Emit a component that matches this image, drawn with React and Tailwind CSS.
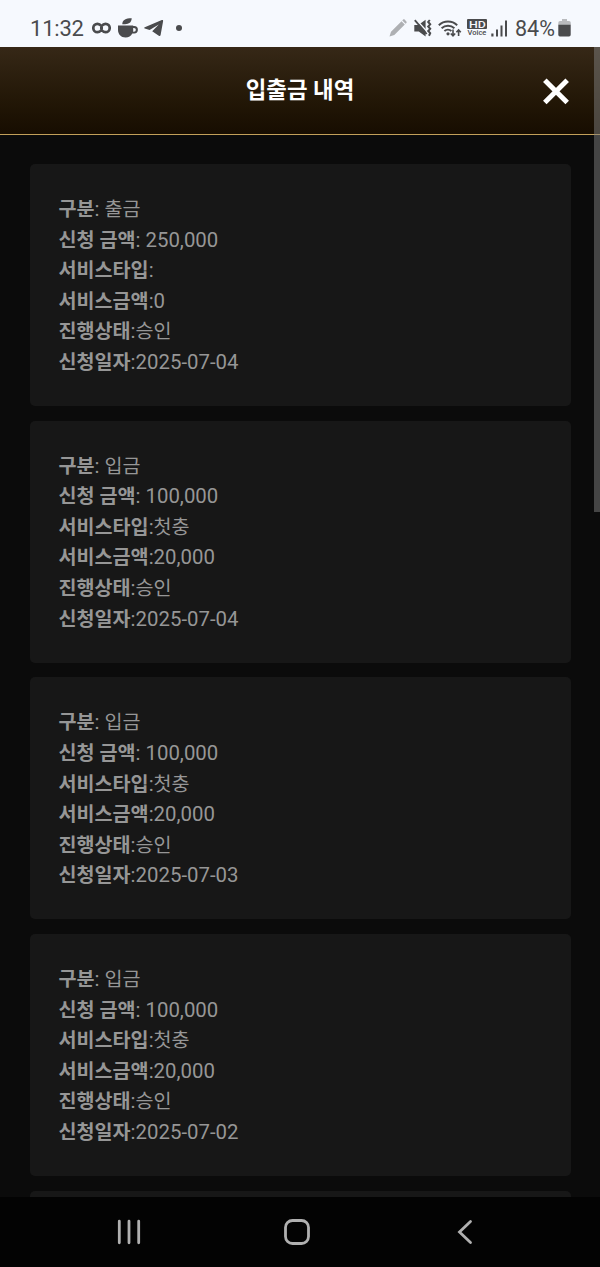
import React from "react";

const records = [
  { id: 1, type: "출금", amount: "250,000", service: "", serviceAmount: "0", status: "승인", date: "2025-07-04" },
  { id: 2, type: "입금", amount: "100,000", service: "첫충", serviceAmount: "20,000", status: "승인", date: "2025-07-04" },
  { id: 3, type: "입금", amount: "100,000", service: "첫충", serviceAmount: "20,000", status: "승인", date: "2025-07-03" },
  { id: 4, type: "입금", amount: "100,000", service: "첫충", serviceAmount: "20,000", status: "승인", date: "2025-07-02" },
];

function StatusBar() {
  return (
    <div className="h-[47px] shrink-0 bg-[#f6f9fe] flex items-center pt-[9px] pl-[30px] pr-[29px] text-[#4a4b4d] text-[22px] leading-none">
      <span className="w-[62px] pt-px tracking-[-0.200px]">11:32</span>

      {/* Notification icons */}
      <svg width="19" height="14" viewBox="0 0 19 14" fill="none" stroke="currentColor" strokeWidth="2.700">
        <path d="M9.500 9C8.400 10.300 7 11.200 5.500 11.200a4.200 4.200 0 0 1 0-8.400C7 2.800 8.400 3.700 9.500 5c1.100-1.300 2.500-2.200 4-2.200a4.200 4.200 0 0 1 0 8.400C12 11.200 10.600 10.300 9.500 9Z" />
        <path d="M8 7h3" strokeWidth="3" />
      </svg>
      <svg className="ml-[7px]" width="20" height="20" viewBox="0 0 20 20" fill="currentColor">
        <path d="M4.300 6.200C4.300 2 7.500.3 13.700.3 13.500 4.300 11 6.200 7 6.200Z" />
        <path
          fillRule="evenodd"
          d="M0 7.500h15.200v.6h1a3.700 3.700 0 0 1 0 7.400h-1.900C12.900 18.200 10.700 19.500 7.600 19.500 3 19.500 0 16 0 12Zm15.200 2.400v3.900h.7a1.950 1.950 0 0 0 0-3.900Z"
        />
      </svg>
      <svg className="ml-[6px]" width="20" height="18" viewBox="0 0 20 18" fill="currentColor">
        <path d="M.8 8.200 17.800 1.100c.9-.4 1.500.1 1.300 1.200l-2.500 13.700c-.2 1.100-.9 1.300-1.800.8L8.200 12.200l6.600-6.800L5.600 11 .8 9.500c-.8-.3-.8-1 0-1.300Z" />
      </svg>
      <span className="ml-[12px] w-1.5 h-1.5 rounded-full bg-[#4a4b4d]" />

      {/* System icons */}
      <div className="ml-auto flex items-center">
        <svg width="18" height="18" viewBox="0 0 18 18" fill="#aeb0b3">
          <path d="M.5 17.500 2 12.700 12.500 2.200l3.300 3.300L5.300 16ZM13.300 1.400l.8-.8c.5-.5 1-.4 1.500 0l1.800 1.800c.4.500.4 1 0 1.500l-.8.8Z" />
        </svg>
        <svg className="ml-[7px]" width="18" height="18" viewBox="0 0 18 18" fill="none" stroke="currentColor">
          <path d="M.3 6h4L11.600.8v16.700L4.800 12.500H.3Z" fill="currentColor" stroke="none" />
          <path d="M1.800.3 13.300 12.800" stroke="#f6f9fe" strokeWidth="1.500" />
          <path d="M.8 1.200 12.700 15" strokeWidth="1.800" />
          <path d="M15.800 1l-1.600 2 2 2.300-2 2.200 2 2.300-2 2.200 2 2.200-1.200 2.500" strokeWidth="2" />
        </svg>
        <svg className="ml-[6px]" width="24" height="18" viewBox="0 0 24 18" fill="none" stroke="currentColor" strokeWidth="1.900">
          <path d="M.8 6.200a13.300 13.300 0 0 1 18.400 0M3.600 9.300a9.200 9.200 0 0 1 12.800 0M6.400 12a5.200 5.200 0 0 1 7 0" />
          <circle cx="10" cy="14.800" r="1.600" fill="currentColor" stroke="none" />
          <path d="M15 10.500v6M12.800 14.500l2.200 2.300 2.200-2.300M20.600 17V11M18.400 13.300l2.200-2.300 2.200 2.300" strokeWidth="1.600" />
        </svg>
        <div className="ml-[5px] w-5 flex flex-col items-center">
          <span className="w-5 h-[10px] rounded-[1px] bg-[#4a4b4d] text-[#f6f9fe] text-[9.500px] leading-[11px] font-medium text-center">
            <span className="inline-block scale-x-130">HD</span>
          </span>
          <span className="text-[7.500px] leading-[8px] font-medium">Voice</span>
        </div>
        <svg className="ml-[4px]" width="17" height="17" viewBox="0 0 17 17" fill="currentColor">
          <path d="M.3 13.500h2.200V16.500H.3ZM5 9.500h2v7H5ZM9.500 5.500h2v11h-2ZM14 .5h2v16h-2Z" />
        </svg>
        <span className="ml-[7px] w-[43px] text-[21.500px] pt-px">84%</span>
        <svg width="13" height="18" viewBox="0 0 13 18">
          <path d="M4 0h5v2h2a1.800 1.800 0 0 1 1.800 1.800V6H.3V3.800A1.800 1.800 0 0 1 2 2h2Z" fill="#b9bbbe" />
          <path d="M.3 5.700h12.400v10A1.800 1.800 0 0 1 11 17.500H2A1.800 1.800 0 0 1 .3 15.700Z" fill="#4a4b4d" />
        </svg>
      </div>
    </div>
  );
}

function Header() {
  return (
    <header className="h-[88px] shrink-0 border-b border-[#c3a05a] bg-gradient-to-b from-[#362817] to-[#170d01] grid grid-cols-[60px_1fr_60px] items-center">
      <h1 className="col-start-2 text-center text-white text-[22.400px] leading-none font-bold">
        입출금 내역
      </h1>
      <button type="button" aria-label="닫기" className="justify-self-center pr-[28px] pt-px">
        <svg width="28" height="28" viewBox="0 0 28 28" fill="none" stroke="#fff" strokeWidth="5">
          <path d="M2.800 3.200l22.400 22.400M25.200 3.200L2.800 25.600" />
        </svg>
      </button>
    </header>
  );
}

function Row({ label, sep = ":", value }) {
  const isKorean = /[가-힣]/.test(value);
  return (
    <p className="h-[30.600px] whitespace-pre">
      <strong className="font-bold text-[19.600px]">{label}</strong>
      {sep}
      <span className={isKorean ? "text-[19.600px]" : ""}>{value}</span>
    </p>
  );
}

function RecordCard({ record }) {
  return (
    <div className="h-[242px] shrink-0 rounded-[5px] bg-[#171717] px-[29px] py-[30px] text-[20.400px] leading-[30.600px] text-[#969696]">
      <Row label="구분" sep=": " value={record.type} />
      <Row label="신청 금액" sep=": " value={record.amount} />
      <Row label="서비스타입" value={record.service} />
      <Row label="서비스금액" value={record.serviceAmount} />
      <Row label="진행상태" value={record.status} />
      <Row label="신청일자" value={record.date} />
    </div>
  );
}

function NavBar() {
  return (
    <nav className="h-[70px] shrink-0 bg-[#030303] flex items-center pl-[116px] text-[#b0b0b0]">
      <svg width="26" height="26" viewBox="0 0 26 26" fill="none" stroke="currentColor" strokeWidth="2.800" strokeLinecap="round">
        <path d="M3.300 2.200v21.600M13 2.200v21.600M22.700 2.200v21.600" />
      </svg>
      <svg className="ml-[142px]" width="26" height="26" viewBox="0 0 26 26" fill="none" stroke="currentColor" strokeWidth="2.800">
        <rect x="1.500" y="1.500" width="23" height="23" rx="7" />
      </svg>
      <svg className="ml-[147px]" width="16" height="26" viewBox="0 0 16 26" fill="none" stroke="currentColor" strokeWidth="2.800" strokeLinecap="round">
        <path d="M13.500 2.500 2.500 13l11 10.500" />
      </svg>
    </nav>
  );
}

function App() {
  return (
    <div className="relative w-[600px] h-[1267px] overflow-hidden bg-[#0b0b0b] flex flex-col font-[Roboto,'Noto_Sans_CJK_KR',sans-serif]">
      <StatusBar />
      <Header />
      <main className="flex-1 min-h-0 overflow-hidden flex flex-col gap-[14.700px] pt-[29px] pl-[29.500px] pr-[29px]">
        {records.map((record) => (
          <RecordCard key={record.id} record={record} />
        ))}
        {/* Top edge of the next card */}
        <div className="flex-1 rounded-t-[5px] bg-[#171717]" />
      </main>
      <NavBar />

      {/* Scrollbar thumb */}
      <div className="absolute right-0 top-[47px] w-1.5 h-[465px] bg-[#7f7f7f]/50" />
    </div>
  );
}

export default App;
